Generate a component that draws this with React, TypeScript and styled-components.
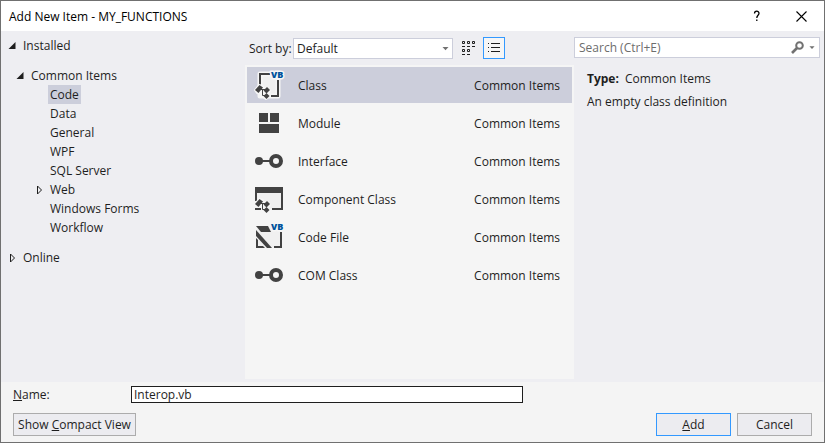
import React, { useState } from "react";
import styled, { createGlobalStyle } from "styled-components";

const GlobalStyle = createGlobalStyle`
  *, *::before, *::after { box-sizing: border-box; }
  body { margin: 0; }
  body, button, input, select {
    font-family: "Open Sans", "Noto Sans", sans-serif;
    font-size: 12px;
    line-height: 19px;
    color: #1e1e1e;
  }
`;

const Dialog = styled.main`
  min-height: 100vh;
  display: flex;
  flex-direction: column;
  border: 1px solid #707070;
  background: #f4f4f4;
`;

const TitleBar = styled.header`
  height: 30px;
  display: flex;
  align-items: center;
  padding-left: 8px;
  background: #fff;
`;

const Title = styled.h1`
  flex: 1;
  margin: 0;
  font-size: 12px;
  font-weight: 400;
  color: #000;
`;

const CaptionButton = styled.button`
  width: 45px;
  height: 28px;
  padding: 0;
  border: 0;
  background: transparent;
  display: grid;
  place-items: center;
  color: #000;
`;

const Body = styled.div`
  flex: 1;
  display: grid;
  grid-template-columns: 244px minmax(329px, 1fr) 250px;
  background: #eeeef2;
`;

const Sidebar = styled.nav`
  padding: 5px 10px 0 7px;
`;

const TreeList = styled.ul<{ $indent?: number }>`
  list-style: none;
  margin: 0;
  padding: 0 0 0 ${(p) => p.$indent ?? 0}px;
`;

const TreeNode = styled.li<{ $spaced?: boolean }>`
  margin-bottom: ${(p) => (p.$spaced ? 11 : 0)}px;
`;

const TreeRow = styled.div`
  height: 19px;
  display: flex;
  align-items: center;
`;

const Expander = styled.span`
  width: 13px;
  height: 19px;
  display: flex;
  align-items: center;
`;

const TreeLabel = styled.button<{ $active?: boolean }>`
  height: 19px;
  padding: 0 2px;
  border: 0;
  background: ${(p) => (p.$active ? "#cccedb" : "transparent")};
  white-space: nowrap;
`;

const Center = styled.section`
  display: flex;
  flex-direction: column;
  padding-bottom: 3px;
`;

const Toolbar = styled.div`
  height: 34px;
  display: flex;
  align-items: center;
  padding: 0 0 0 4px;
`;

const SortLabel = styled.label`
  width: 44px;
  white-space: nowrap;
`;

const SelectBox = styled.div`
  position: relative;
  width: 160px;
  display: flex;

  svg {
    position: absolute;
    right: 4px;
    top: 9px;
    pointer-events: none;
  }
`;

const Select = styled.select`
  appearance: none;
  width: 100%;
  height: 21px;
  padding: 0 3px;
  border: 1px solid #cccedb;
  border-radius: 0;
  background: #fff;
  line-height: 17px;
`;

const ViewButton = styled.button<{ $on?: boolean }>`
  width: 22px;
  height: 22px;
  padding: 0;
  margin-left: ${(p) => (p.$on ? 3 : 5)}px;
  display: flex;
  align-items: center;
  justify-content: center;
  border: 1px solid ${(p) => (p.$on ? "#3399ff" : "transparent")};
  background: ${(p) => (p.$on ? "#f6f6f6" : "transparent")};
`;

const Templates = styled.ul`
  flex: 1;
  margin: 0;
  padding: 2px;
  list-style: none;
  display: flex;
  flex-direction: column;
  gap: 2px;
  background: #f5f5f5;
`;

const TemplateRow = styled.button<{ $active: boolean }>`
  width: 100%;
  height: 36px;
  padding: 0 12px 0 6px;
  border: 0;
  display: flex;
  align-items: center;
  gap: 13px;
  text-align: left;
  background: ${(p) => (p.$active ? "#cccedb" : "transparent")};
`;

const TemplateDrawing = styled.svg`
  flex: none;
  overflow: visible;
`;

const TemplateName = styled.span`
  flex: 1;
`;

const Details = styled.aside`
  display: flex;
  flex-direction: column;
  padding: 6px 4px 0 0;
`;

const SearchBox = styled.div`
  height: 21px;
  display: flex;
  align-items: center;
  border: 1px solid #cccedb;
  background: #fff;
`;

const SearchInput = styled.input`
  flex: 1;
  min-width: 0;
  height: 19px;
  padding: 0 4px;
  border: 0;
  outline: 0;
  background: transparent;
  &::placeholder { color: #6d6d6d; opacity: 1; }
`;

const SearchButton = styled.button`
  height: 19px;
  padding: 0 4px 0 0;
  border: 0;
  background: transparent;
  display: flex;
  align-items: center;
  gap: 5px;
`;

const Description = styled.div`
  padding: 11px 12px 0 13px;
`;

const DetailLine = styled.p`
  margin: 0 0 4px;
`;

const DetailKey = styled.strong`
  margin-right: 6px;
`;

const Footer = styled.footer`
  padding: 3px 12px 6px;
`;

const NameRow = styled.div`
  display: flex;
  align-items: center;
`;

const NameLabel = styled.label`
  width: 118px;
`;

const NameInput = styled.input`
  width: 49%;
  height: 17px;
  padding: 0 2px;
  border: 1px solid #1e1e1e;
  border-radius: 0;
  outline: 0;
  background: #fff;
  line-height: 15px;
`;

const Actions = styled.div`
  display: flex;
  gap: 6px;
  margin-top: 9px;
`;

const ActionButton = styled.button<{ $primary?: boolean; $wide?: boolean }>`
  width: ${(p) => (p.$wide ? 123 : 75)}px;
  height: 23px;
  padding: 0;
  margin-right: ${(p) => (p.$wide ? "auto" : 0)};
  border: 1px solid ${(p) => (p.$primary ? "#3399ff" : "#acacac")};
  background: #ececf0;
  white-space: nowrap;
`;

const INK = "#424242";

const OpenArrow = () => (
  <svg width="8" height="8" viewBox="0 0 8 8" aria-hidden="true">
    <path d="M7.5 0V7H0.5Z" fill="#1e1e1e" />
  </svg>
);

const ClosedArrow = () => (
  <svg width="8" height="10" viewBox="0 0 8 10" aria-hidden="true">
    <path d="M2.5 1V9L6.5 5Z" fill="none" stroke="#1e1e1e" />
  </svg>
);

const DropArrow = ({ size = 7 }: { size?: number }) => (
  <svg width={size} height="4" viewBox="0 0 7 4" aria-hidden="true">
    <path d="M0.5 0H6.5L3.5 3.2Z" fill="#717171" />
  </svg>
);

const VbMark = () => (
  <text
    x="18"
    y="9"
    fontFamily="Open Sans, sans-serif"
    fontSize="9"
    fontWeight="800"
    fill="#00539c"
    stroke="#f6f6f6"
    strokeWidth="3"
    strokeLinejoin="round"
    paintOrder="stroke"
  >
    VB
  </text>
);

const Gears = () => (
  <g>
    <path
      d="M2 21L6 16L10 17L10 19H14L17 22L15 25L17 27L13 30L10 28V24H7L4 24Z"
      fill="#f6f6f6"
      stroke="#f6f6f6"
      strokeWidth="2"
      strokeLinejoin="round"
    />
    <path d="M6.5 16L10 18.5L5.5 24L2 21Z" fill={INK} />
    <path d="M14 18L17 21L13.5 24.5L10.5 21.5Z" fill={INK} />
    <path d="M13.5 24L16.5 27L13.5 30L10.5 27Z" fill={INK} />
    <path d="M8 20.5H13M9.5 20.5V26.5H13" fill="none" stroke={INK} />
  </g>
);

const Pin = () => (
  <>
    <circle cx="6" cy="16" r="4" fill={INK} />
    <path d="M9 16H18" stroke={INK} strokeWidth="2" />
    <circle cx="23" cy="16" r="5" fill="#f6f6f6" stroke={INK} strokeWidth="4" />
  </>
);

const drawings: Record<string, React.ReactNode> = {
  class: (
    <>
      <path
        d="M7 5H25V27H7Z"
        fill="#f0f0f0"
        stroke="#f6f6f6"
        strokeWidth="5"
        strokeLinejoin="round"
      />
      <path d="M17 5H7V16M25 11V27H18" fill="none" stroke={INK} strokeWidth="2" />
      <VbMark />
      <Gears />
    </>
  ),
  module: <path d="M6 6H15V15H6ZM17 6H26V15H17ZM6 17H26V26H6Z" fill={INK} />,
  pin: <Pin />,
  component: (
    <>
      <path d="M3 6H29V26H3Z" fill="#f0f0f0" />
      <path d="M2 4H30V27H19V25H28V10H4V18H2Z" fill={INK} />
      <path d="M2 25H8V27H2Z" fill={INK} />
      <Gears />
    </>
  ),
  file: (
    <>
      <path d="M4 6H28V26H4Z" fill="#f0f0f0" />
      <path d="M3 5H15L18 11H8Z" fill={INK} />
      <path d="M3 9L19 27H14L3 15Z" fill={INK} />
      <path d="M3 17L5 19V25H10L12 27H3Z" fill={INK} />
      <path d="M29 11V27H21V25H27V11Z" fill={INK} />
      <VbMark />
    </>
  ),
};

const TemplateIcon = ({ kind }: { kind: string }) => (
  <TemplateDrawing width="32" height="32" viewBox="0 0 32 32" aria-hidden="true">
    {drawings[kind]}
  </TemplateDrawing>
);

const GridIcon = () => (
  <svg width="14" height="14" viewBox="0 0 14 14" aria-hidden="true">
    <path
      d="M.5 .5h2v2h-2zM5.5 .5h2v2h-2zM10.5 .5h2v2h-2zM.5 8.5h2v2h-2zM5.5 8.5h2v2h-2z"
      fill="none"
      stroke="#1e1e1e"
    />
    <path d="M0 5.5H3M5 5.5H8M10 5.5H13M0 13.5H3M5 13.5H8" stroke="#1e1e1e" />
  </svg>
);

const ListIcon = () => (
  <svg width="12" height="10" viewBox="0 0 12 10" aria-hidden="true">
    <path d="M0 .5H1M3 .5H12M0 4.5H1M3 4.5H12M0 8.5H1M3 8.5H12" stroke="#1e1e1e" />
  </svg>
);

const templates = [
  { name: "Class", icon: "class" },
  { name: "Module", icon: "module" },
  { name: "Interface", icon: "pin" },
  { name: "Component Class", icon: "component" },
  { name: "Code File", icon: "file" },
  { name: "COM Class", icon: "pin" },
];

const categories = [
  "Code", "Data", "General", "WPF", "SQL Server", "Web", "Windows Forms", "Workflow",
];

export default function App() {
  const [category, setCategory] = useState("Code");
  const [template, setTemplate] = useState("Class");

  return (
    <>
      <GlobalStyle />
      <Dialog>
        <TitleBar>
          <Title>Add New Item - MY_FUNCTIONS</Title>
          <CaptionButton aria-label="Help">
            <svg width="8" height="12" viewBox="0 0 8 12" aria-hidden="true">
              <path
                d="M1.5 3.5C1.5 .4 6 .4 6 3.3C6 5.3 3.8 5.3 3.8 8M3.8 9.5V11"
                fill="none"
                stroke="currentColor"
                strokeWidth="1.3"
              />
            </svg>
          </CaptionButton>
          <CaptionButton aria-label="Close">
            <svg width="11" height="11" viewBox="0 0 11 11" aria-hidden="true">
              <path d="M.5 .5L10.5 10.5M10.5 .5L.5 10.5" stroke="currentColor" strokeWidth="1.1" />
            </svg>
          </CaptionButton>
        </TitleBar>

        <Body>
          <Sidebar aria-label="Template categories">
            <TreeList>
              <TreeNode $spaced>
                <TreeRow>
                  <Expander><OpenArrow /></Expander>
                  <TreeLabel>Installed</TreeLabel>
                </TreeRow>
              </TreeNode>
              <TreeNode $spaced>
                <TreeList $indent={8}>
                  <TreeNode>
                    <TreeRow>
                      <Expander><OpenArrow /></Expander>
                      <TreeLabel>Common Items</TreeLabel>
                    </TreeRow>
                    <TreeList $indent={19}>
                      {categories.map((name) => (
                        <TreeNode key={name}>
                          <TreeRow>
                            <Expander>{name === "Web" && <ClosedArrow />}</Expander>
                            <TreeLabel
                              $active={name === category}
                              onClick={() => setCategory(name)}
                            >
                              {name}
                            </TreeLabel>
                          </TreeRow>
                        </TreeNode>
                      ))}
                    </TreeList>
                  </TreeNode>
                </TreeList>
              </TreeNode>
              <TreeNode>
                <TreeRow>
                  <Expander><ClosedArrow /></Expander>
                  <TreeLabel>Online</TreeLabel>
                </TreeRow>
              </TreeNode>
            </TreeList>
          </Sidebar>

          <Center>
            <Toolbar>
              <SortLabel htmlFor="sort">Sort by:</SortLabel>
              <SelectBox>
                <Select id="sort" defaultValue="Default">
                  <option>Default</option>
                </Select>
                <DropArrow />
              </SelectBox>
              <ViewButton aria-label="Small icons"><GridIcon /></ViewButton>
              <ViewButton $on aria-label="Medium icons"><ListIcon /></ViewButton>
            </Toolbar>
            <Templates>
              {templates.map((t) => (
                <li key={t.name}>
                  <TemplateRow
                    $active={t.name === template}
                    onClick={() => setTemplate(t.name)}
                  >
                    <TemplateIcon kind={t.icon} />
                    <TemplateName>{t.name}</TemplateName>
                    <span>Common Items</span>
                  </TemplateRow>
                </li>
              ))}
            </Templates>
          </Center>

          <Details>
            <SearchBox>
              <SearchInput aria-label="Search" placeholder="Search (Ctrl+E)" />
              <SearchButton aria-label="Search options">
                <svg width="13" height="13" viewBox="0 0 13 13" aria-hidden="true">
                  <circle cx="8.5" cy="4.5" r="3.3" fill="none" stroke="#717171" strokeWidth="2" />
                  <path d="M6 7L1 12" stroke="#717171" strokeWidth="2.6" />
                </svg>
                <DropArrow size={6} />
              </SearchButton>
            </SearchBox>
            <Description>
              <DetailLine><DetailKey>Type:</DetailKey>Common Items</DetailLine>
              <DetailLine>An empty class definition</DetailLine>
            </Description>
          </Details>
        </Body>

        <Footer>
          <NameRow>
            <NameLabel htmlFor="name"><u>N</u>ame:</NameLabel>
            <NameInput id="name" defaultValue="Interop.vb" />
          </NameRow>
          <Actions>
            <ActionButton $wide>Show <u>C</u>ompact View</ActionButton>
            <ActionButton $primary><u>A</u>dd</ActionButton>
            <ActionButton>Cancel</ActionButton>
          </Actions>
        </Footer>
      </Dialog>
    </>
  );
}
